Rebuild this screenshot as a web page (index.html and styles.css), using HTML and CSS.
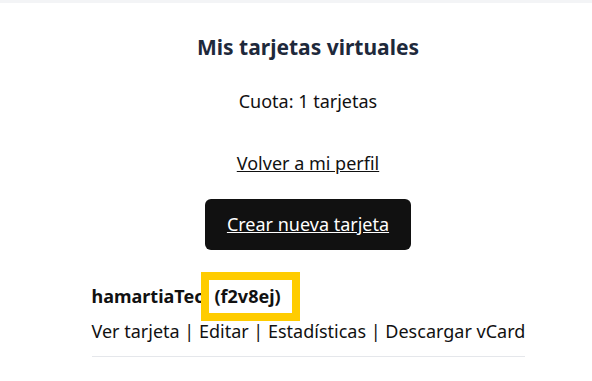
FILE: index.html
```html
<!DOCTYPE html>
<html lang="es">
<head>
    <meta charset="UTF-8">
    <meta name="viewport" content="width=device-width, initial-scale=1.0">
    <title>Mis tarjetas virtuales</title>
    <link rel="stylesheet" href="styles.css">
</head>
<body>
    <div class="topbar"></div>
    <main class="page">
        <div class="container">
            <h1>Mis tarjetas virtuales</h1>
            <p class="quota">Cuota: 1 tarjetas</p>
            <p class="back"><a href="#">Volver a mi perfil</a></p>
            <p class="create"><a class="btn" href="#">Crear nueva tarjeta</a></p>

            <ul class="cards">
                <li class="card">
                    <div class="card-name">hamartiaTec<span class="code">(f2v8ej)</span></div>
                    <div class="card-links">
                        <a href="#">Ver tarjeta</a> | <a href="#">Editar</a> | <a href="#">Estadísticas</a> | <a href="#">Descargar vCard</a>
                    </div>
                </li>
            </ul>
        </div>
    </main>
</body>
</html>
```

FILE: styles.css
```css
body {
    margin: 0;
    font-family: "Segoe UI", "Noto Sans", Arial, sans-serif;
    color: #111;
    background-color: #fff;
}
.topbar {
    height: 3px;
    background-color: #f3f4f6;
}
.page {
    padding: 0 0 0 24px;
}
.container {
    width: 433px;
    margin: 0 auto;
    text-align: center;
}
h1 {
    font-size: 21px;
    color: #1e293b;
    margin: 30px 0 0;
    line-height: 28px;
}
.quota {
    font-size: 18px;
    margin: 28px 0 0;
    line-height: 24px;
}
.back {
    font-size: 18px;
    margin: 38px 0 0;
    line-height: 24px;
}
.back a {
    color: #111;
}
.create {
    margin: 24px 0 0;
}
.btn {
    display: inline-block;
    background-color: #111;
    color: #fff;
    font-size: 18px;
    line-height: 24px;
    padding: 13px 22px 14px;
    border-radius: 6px;
}
.cards {
    list-style: none;
    margin: 34px 0 0;
    padding: 0;
    text-align: left;
}
.card {
    border-bottom: 1px solid #e5e7eb;
    padding-bottom: 13px;
}
.card-name {
    font-weight: bold;
    font-size: 18px;
    line-height: 24px;
}
.code {
    position: relative;
    z-index: 1;
    border: 8px solid #ffcc00;
    background-color: #fff;
    padding: 4px 11px 5px 6px;
    margin-left: -3px;
}
.card-links {
    font-size: 18px;
    line-height: 24px;
    margin-top: 11px;
    white-space: nowrap;
}
.card-links a {
    color: #111;
    text-decoration: none;
}
```
